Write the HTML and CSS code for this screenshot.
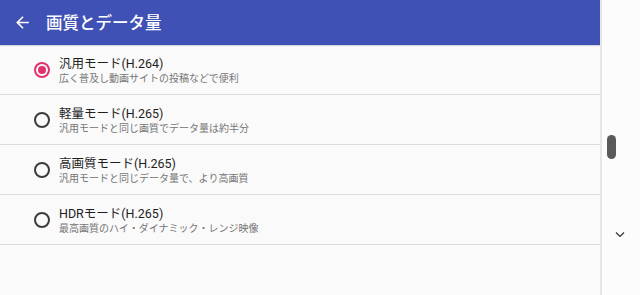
FILE: index.html
```html
<!DOCTYPE html>
<html lang="ja">
<head>
  <meta charset="UTF-8">
  <title>画質とデータ量</title>
  <link rel="stylesheet" href="styles.css">
</head>
<body>
  <div class="screen">
    <div class="main">
      <div class="toolbar">
        <svg class="back" width="19" height="19" viewBox="0 0 24 24"><path d="M20 11H7.83l5.59-5.59L12 4l-8 8 8 8 1.41-1.41L7.83 13H20v-2z" fill="#fff"/></svg>
        <h1>画質とデータ量</h1>
      </div>
      <div class="list">
        <div class="item">
          <span class="radio checked"></span>
          <div class="texts">
            <div class="title">汎用モード(H.264)</div>
            <div class="sub">広く普及し動画サイトの投稿などで便利</div>
          </div>
        </div>
        <div class="item">
          <span class="radio"></span>
          <div class="texts">
            <div class="title">軽量モード(H.265)</div>
            <div class="sub">汎用モードと同じ画質でデータ量は約半分</div>
          </div>
        </div>
        <div class="item">
          <span class="radio"></span>
          <div class="texts">
            <div class="title">高画質モード(H.265)</div>
            <div class="sub">汎用モードと同じデータ量で、より高画質</div>
          </div>
        </div>
        <div class="item">
          <span class="radio"></span>
          <div class="texts">
            <div class="title">HDRモード(H.265)</div>
            <div class="sub">最高画質のハイ・ダイナミック・レンジ映像</div>
          </div>
        </div>
      </div>
    </div>
    <div class="side">
      <div class="thumb"></div>
      <svg class="chev" width="10" height="7" viewBox="0 0 10 7"><path d="M1 1.5l4 4 4-4" fill="none" stroke="#333" stroke-width="1.2"/></svg>
    </div>
  </div>
</body>
</html>
```

FILE: styles.css
```css
* {
  margin: 0;
  padding: 0;
  box-sizing: border-box;
}

body {
  width: 640px;
  height: 295px;
  overflow: hidden;
  background: #fafafa;
  font-family: Roboto, "Noto Sans CJK JP", sans-serif;
}

.screen {
  display: flex;
  height: 295px;
}

.main {
  width: 600px;
  display: flex;
  flex-direction: column;
}

.toolbar {
  height: 45px;
  background: #3f51b5;
  display: flex;
  align-items: center;
  padding-left: 13px;
  box-shadow: 0 1px 1px rgba(0, 0, 0, 0.15);
}

.toolbar h1 {
  color: #fff;
  font-family: "Noto Sans CJK JP", sans-serif;
  font-size: 16.5px;
  font-weight: 500;
  margin-left: 14px;
  margin-top: -1px;
}

.item {
  height: 50px;
  border-bottom: 1px solid #dcdcdc;
  display: flex;
  align-items: center;
  padding-left: 34px;
}

.radio {
  width: 16px;
  height: 16px;
  border: 2px solid #3c3c3c;
  border-radius: 50%;
  display: flex;
  align-items: center;
  justify-content: center;
  margin-top: 1px;
}

.radio.checked {
  border-color: #e0336d;
}

.radio.checked::after {
  content: "";
  width: 8px;
  height: 8px;
  border-radius: 50%;
  background: #e0336d;
}

.texts {
  margin-left: 9px;
  margin-top: 2px;
}

.title {
  font-size: 12.5px;
  color: #1e1e1e;
  line-height: 17px;
}

.sub {
  font-size: 10px;
  color: #757575;
  line-height: 14px;
}

.side {
  width: 40px;
  border-left: 2px solid #e6e6e6;
  background: #fcfcfc;
  display: flex;
  flex-direction: column;
  padding-top: 135px;
}

.thumb {
  width: 9px;
  height: 24px;
  margin-left: 5px;
  background: #5a5a5a;
  border-radius: 5px;
}

.chev {
  margin-left: 13px;
  margin-top: 72px;
}
```
